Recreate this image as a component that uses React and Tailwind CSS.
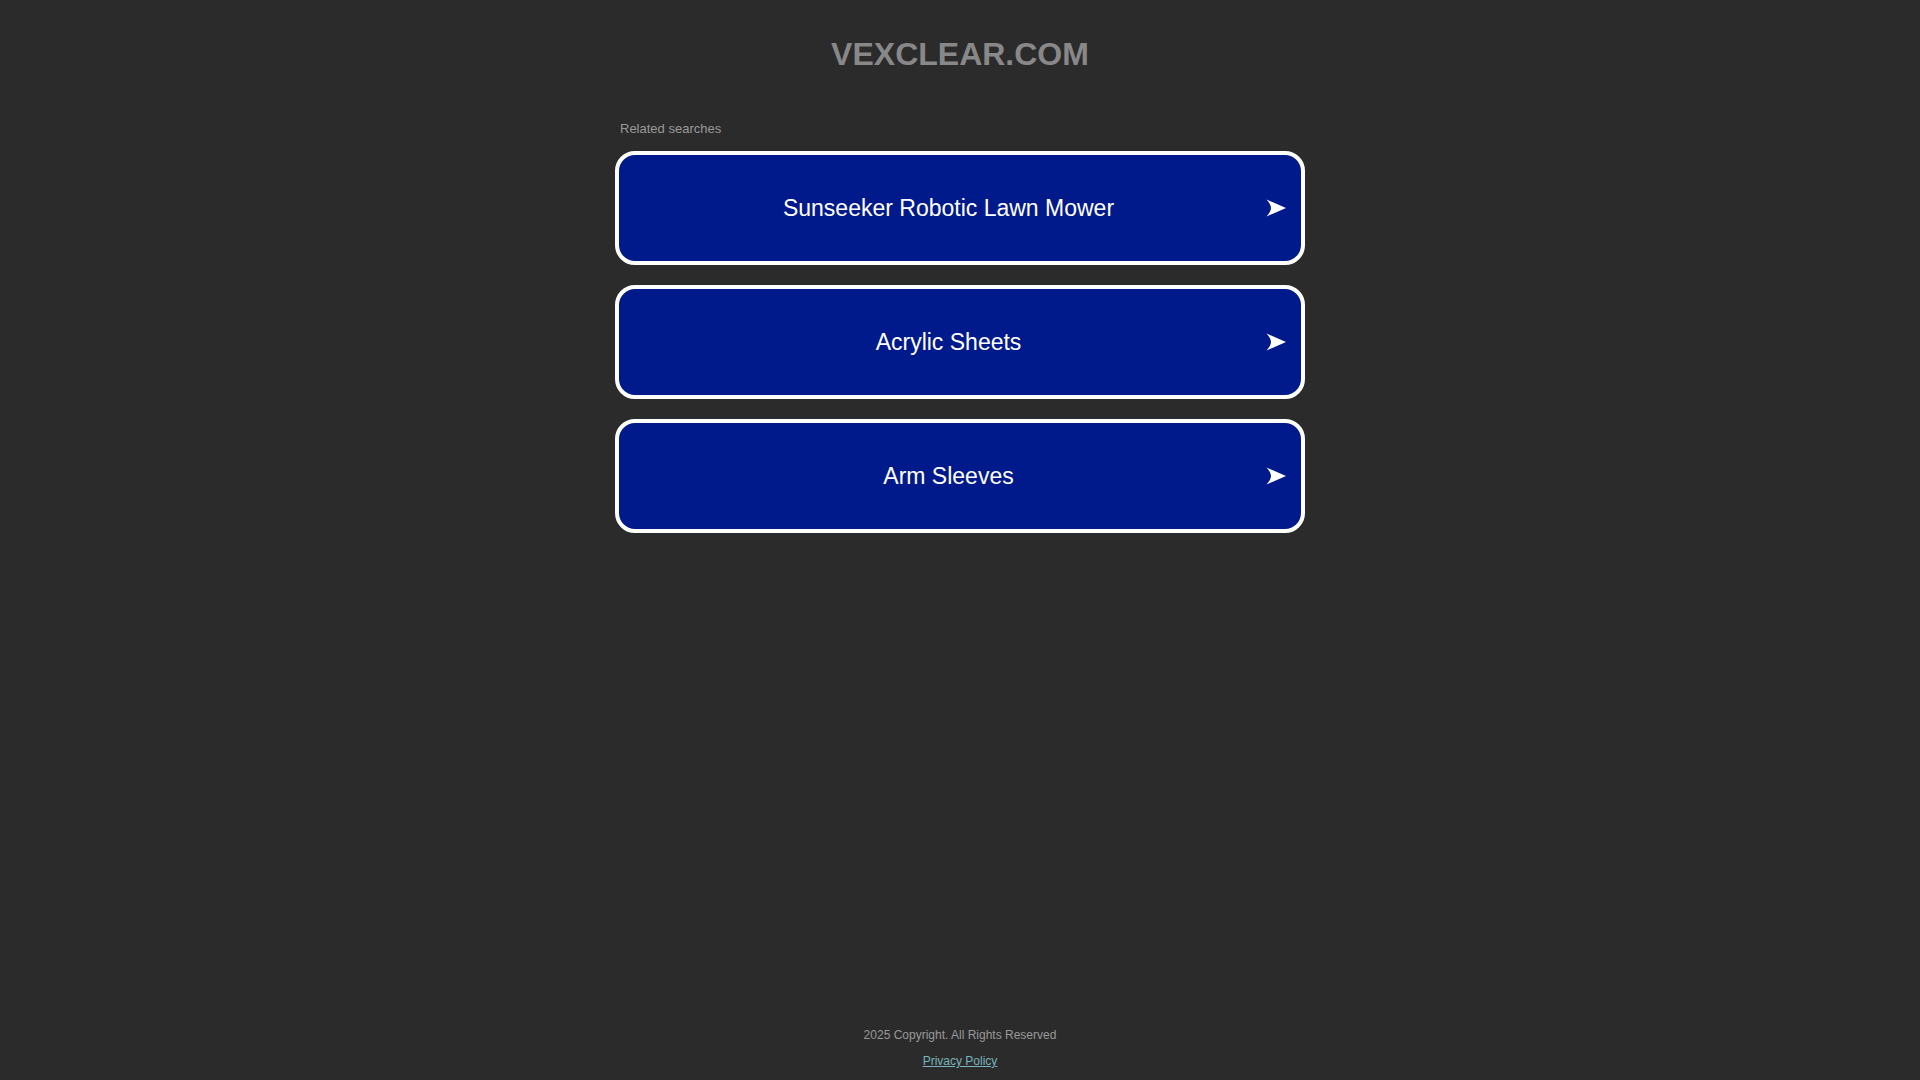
import React from "react";

const items = ["Sunseeker Robotic Lawn Mower", "Acrylic Sheets", "Arm Sleeves"];

function Arrow() {
  return (
    <svg width="20" height="18" viewBox="0 0 20 18" className="shrink-0 mr-[15px]">
      <path d="M0.5 0.5 L20 9 L0.5 17.5 Q5 12.5 5 9 Q5 5.5 0.5 0.5 Z" fill="#ffffff" />
    </svg>
  );
}

export default function App() {
  return (
    <div
      className="min-h-screen flex flex-col bg-[#2b2b2b]"
      style={{ fontFamily: '"Liberation Sans", Arial, sans-serif' }}
    >
      <h1 className="mt-[36px] text-center text-[32px] leading-[37px] font-bold text-[#888888]">
        VEXCLEAR.COM
      </h1>
      <div className="w-[690px] mx-auto mt-[48px]">
        <div className="pl-[5px] text-[13px] leading-[15px] text-[#999999]">Related searches</div>
        <div className="mt-[15px] flex flex-col gap-[20px]">
          {items.map((t) => (
            <a
              key={t}
              href="#"
              className="h-[114px] flex items-center rounded-[20px] border-[4px] border-white bg-[#011a8b] text-white"
            >
              <span className="flex-1 ml-[12px] text-center text-[23px] leading-[27px]">{t}</span>
              <Arrow />
            </a>
          ))}
        </div>
      </div>
      <footer className="mt-auto pb-[12px] flex flex-col items-center gap-[12px] text-[12px] leading-[14px]">
        <div className="text-[#999999]">2025 Copyright. All Rights Reserved</div>
        <a href="#" className="underline text-[#7ab3bb]">Privacy Policy</a>
      </footer>
    </div>
  );
}
